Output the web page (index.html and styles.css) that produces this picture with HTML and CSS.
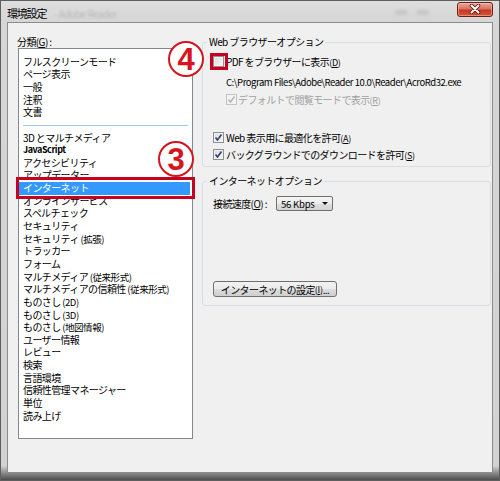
FILE: index.html
```html
<!DOCTYPE html>
<html lang="ja">
<head>
<meta charset="utf-8">
<title>環境設定</title>
<link rel="stylesheet" href="styles.css">
</head>
<body>
<div class="window">
  <div class="titlebar">
    <span class="title">環境設定</span>
    <span class="title-ghost">- Adobe Reader</span>
    <span class="ghost-btns"><span class="gb"></span><span class="gb"></span></span>
    <span class="close" aria-label="閉じる">
      <svg width="14" height="10" viewBox="0 0 14 10">
        <path d="M3.5 1.5 L10.5 8.5 M10.5 1.5 L3.5 8.5" stroke="#5a1810" stroke-width="3.6" stroke-linecap="round" fill="none"/>
        <path d="M3.5 1.5 L10.5 8.5 M10.5 1.5 L3.5 8.5" stroke="#ffffff" stroke-width="1.9" stroke-linecap="round" fill="none"/>
      </svg>
    </span>
  </div>
  <div class="client">
    <div class="pane-left">
      <div class="cat-label">分類(<u>G</u>) :</div>
      <ul class="listbox">
        <li>フルスクリーンモード</li>
        <li>ページ表示</li>
        <li>一般</li>
        <li>注釈</li>
        <li>文書</li>
        <li class="sep"></li>
        <li>3D とマルチメディア</li>
        <li class="latin">JavaScript</li>
        <li>アクセシビリティ</li>
        <li>アップデーター</li>
        <li class="selected">インターネット</li>
        <li>オンラインサービス</li>
        <li>スペルチェック</li>
        <li>セキュリティ</li>
        <li>セキュリティ <span class="sm">(拡張)</span></li>
        <li>トラッカー</li>
        <li>フォーム</li>
        <li>マルチメディア <span class="sm">(従来形式)</span></li>
        <li>マルチメディアの信頼性 <span class="sm">(従来形式)</span></li>
        <li>ものさし <span class="sm">(2D)</span></li>
        <li>ものさし <span class="sm">(3D)</span></li>
        <li>ものさし <span class="sm">(地図情報)</span></li>
        <li>ユーザー情報</li>
        <li>レビュー</li>
        <li>検索</li>
        <li>言語環境</li>
        <li>信頼性管理マネージャー</li>
        <li>単位</li>
        <li>読み上げ</li>
      </ul>
    </div>
    <div class="pane-right">
      <fieldset class="group group-web">
        <legend>Web ブラウザーオプション</legend>
        <div class="row row-pdf"><span class="cb"></span><span>PDF をブラウザーに表示<span class="acc">(<u>D</u>)</span></span></div>
        <div class="path">C:\Program Files\Adobe\Reader 10.0\Reader\AcroRd32.exe</div>
        <div class="row row-default disabled"><span class="cb checked"><svg width="9" height="9" viewBox="0 0 9 9"><path d="M1.5 4.5 L3.5 7 L7.5 1.5" stroke="#b5b5b5" stroke-width="1.5" fill="none"/></svg></span><span>デフォルトで閲覧モードで表示<span class="acc">(<u>R</u>)</span></span></div>
        <div class="row row-web"><span class="cb checked"><svg width="9" height="9" viewBox="0 0 9 9"><path d="M1.5 4.5 L3.5 7 L7.5 1.5" stroke="#2c3f72" stroke-width="1.6" fill="none"/></svg></span><span>Web 表示用に最適化を許可<span class="acc">(<u>A</u>)</span></span></div>
        <div class="row row-bg"><span class="cb checked"><svg width="9" height="9" viewBox="0 0 9 9"><path d="M1.5 4.5 L3.5 7 L7.5 1.5" stroke="#2c3f72" stroke-width="1.6" fill="none"/></svg></span><span>バックグラウンドでのダウンロードを許可<span class="acc">(<u>S</u>)</span></span></div>
      </fieldset>
      <fieldset class="group group-net">
        <legend>インターネットオプション</legend>
        <div class="row row-speed">
          <span class="speed-label">接続速度(<u>O</u>) :</span>
          <span class="combo"><span class="combo-text">56 Kbps</span><span class="combo-arrow"></span></span>
        </div>
        <div class="btn">インターネットの設定<span class="acc">(<u>I</u>)</span>...</div>
      </fieldset>
    </div>
  </div>
  <span class="mark mark-4">4</span>
  <span class="mark mark-3">3</span>
  <span class="redbox redbox-pdf"></span>
  <span class="redbox redbox-net"></span>
</div>
</body>
</html>
```

FILE: styles.css
```css
* {
  box-sizing: border-box;
  margin: 0;
  padding: 0;
}

html, body {
  width: 500px;
  height: 481px;
  overflow: hidden;
  background: #ffffff;
}

body {
  font-family: "Noto Sans CJK JP", "Noto Sans", sans-serif;
  font-size: 10px;
  letter-spacing: -0.6px;
  color: #000;
}

.window {
  position: relative;
  width: 500px;
  height: 481px;
  border: 1px solid #5e5e5e;
  background: linear-gradient(to bottom, #dedede 0, #d6d6d6 20px, #d2d2d2 465px, #8a8a8a 472px, #4e4e4e 479px);
  display: flex;
  flex-direction: column;
  padding: 0 6px 7px 6px;
}

.titlebar {
  height: 21px;
  display: flex;
  align-items: center;
  position: relative;
}

.title {
  font-size: 11px;
  letter-spacing: -1.2px;
  color: #000;
  padding-top: 3px;
}

.title-ghost {
  margin-left: 8px;
  padding-top: 3px;
  font-size: 10px;
  color: #b9b9b9;
  filter: blur(1.3px);
}

.ghost-btns {
  margin-left: auto;
  display: flex;
  gap: 10px;
  margin-right: 28px;
  padding-top: 2px;
}

.gb {
  width: 12px;
  height: 5px;
  background: #c6c6c6;
  filter: blur(1.5px);
}

.close {
  width: 36px;
  height: 15px;
  margin-top: -5px;
  border: 1px solid #6b2016;
  border-radius: 3px;
  background: linear-gradient(to bottom, #e9a99b 0%, #d9735f 45%, #c53b20 55%, #d4553a 100%);
  display: flex;
  align-items: center;
  justify-content: center;
  box-shadow: inset 0 0 0 1px rgba(255, 200, 190, 0.5);
}

.client {
  flex: 1;
  display: flex;
  background: #f0f0f0;
  border: 1px solid #8c8c8c;
  padding: 13px 1px 0 10px;
}

.pane-left {
  width: 175px;
  display: flex;
  flex-direction: column;
}

.cat-label {
  height: 12px;
  line-height: 12px;
  margin-left: -1px;
}

.listbox {
  list-style: none;
  width: 175px;
  height: 391px;
  background: #fff;
  border: 1px solid #828790;
  padding-top: 6.7px;
}

.listbox li {
  height: 12.65px;
  line-height: 12.65px;
  padding-left: 4px;
  margin-right: 2px;
  white-space: nowrap;
}

.listbox li.latin {
  font-weight: 700;
  font-size: 9px;
  letter-spacing: -0.45px;
}

.listbox li.sep {
  position: relative;
}

.listbox li.sep::before {
  content: "";
  position: absolute;
  left: 4px;
  right: 2px;
  top: 6px;
  height: 1px;
  background: #9cc8f0;
}

.listbox li.selected {
  background: #3399ff;
  color: #fff;
}

.sm {
  font-size: 9.5px;
  letter-spacing: -0.45px;
}

.acc {
  font-size: 9px;
  letter-spacing: -0.3px;
}

.pane-right {
  flex: 1;
  margin-left: 9px;
  display: flex;
  flex-direction: column;
}

.group {
  min-width: 0;
  border: 1px solid #d5dfe5;
  border-radius: 3px;
  padding: 0;
}

.group legend {
  margin-left: 4px;
  padding: 0 2px;
  line-height: 12px;
  height: 12px;
}

.group-web {
  padding-bottom: 5px;
}

.group-net {
  margin-top: 8px;
  padding-bottom: 8px;
}

.row {
  display: flex;
  align-items: center;
  white-space: nowrap;
}

.cb {
  width: 11px;
  height: 11px;
  flex: none;
  border: 1px solid #8f8f8f;
  background: linear-gradient(135deg, #dadada, #f8f8f8);
  box-shadow: inset 0 0 0 1px #f2f2f2;
  margin-right: 2px;
  display: flex;
  align-items: center;
  justify-content: center;
}

.cb svg {
  display: block;
}

.row-pdf {
  height: 16px;
  margin-top: 5px;
  margin-left: 10px;
}

.path {
  height: 14px;
  line-height: 14px;
  margin-top: 6px;
  margin-left: 23px;
  font-size: 9.5px;
  letter-spacing: -0.45px;
  white-space: nowrap;
}

.row-default {
  height: 14px;
  margin-top: 3px;
  margin-left: 23px;
}

.row-default .cb {
  margin-right: 1px;
  border-color: #c4c4c4;
  background: #f4f4f4;
}

.disabled {
  color: #a0a0a0;
}

.row-web {
  height: 14px;
  margin-top: 24px;
  margin-left: 10px;
}

.row-bg {
  height: 14px;
  margin-top: 3px;
  margin-left: 10px;
}

.row-speed {
  height: 15px;
  margin-top: 9px;
  margin-left: 10px;
}

.speed-label {
  width: 63px;
}

.combo {
  width: 57px;
  height: 15px;
  border: 1px solid #707070;
  border-radius: 2px;
  background: linear-gradient(to bottom, #f4f4f4 0%, #ececec 50%, #dfdfdf 51%, #d3d3d3 100%);
  display: flex;
  align-items: center;
}

.combo-text {
  flex: 1;
  padding-left: 4px;
  font-size: 9.5px;
  letter-spacing: -0.2px;
}

.combo-arrow {
  width: 0;
  height: 0;
  margin-right: 4px;
  border-left: 3px solid transparent;
  border-right: 3px solid transparent;
  border-top: 3px solid #111;
}

.btn {
  width: 124px;
  height: 16px;
  margin-top: 70px;
  margin-left: 10px;
  border: 1px solid #707070;
  border-radius: 3px;
  background: linear-gradient(to bottom, #f2f2f2 0%, #ebebeb 50%, #dddddd 51%, #cfcfcf 100%);
  display: flex;
  align-items: center;
  justify-content: center;
  white-space: nowrap;
}

.mark {
  position: absolute;
  width: 36px;
  height: 36px;
  border: 2px solid #d5141d;
  border-radius: 50%;
  background: #fff;
  color: #d5141d;
  font-family: "Liberation Sans", Arial, sans-serif;
  font-weight: 700;
  font-size: 31px;
  letter-spacing: 0;
  line-height: 1;
  display: flex;
  align-items: center;
  justify-content: center;
}

.mark-4 {
  left: 167px;
  top: 40px;
}

.mark-3 {
  left: 157px;
  top: 140px;
}

.redbox {
  position: absolute;
  border: 3px solid #c6001e;
}

.redbox-pdf {
  left: 209px;
  top: 52px;
  width: 18px;
  height: 17px;
}

.redbox-net {
  left: 15px;
  top: 176px;
  width: 179px;
  height: 22px;
}
```
